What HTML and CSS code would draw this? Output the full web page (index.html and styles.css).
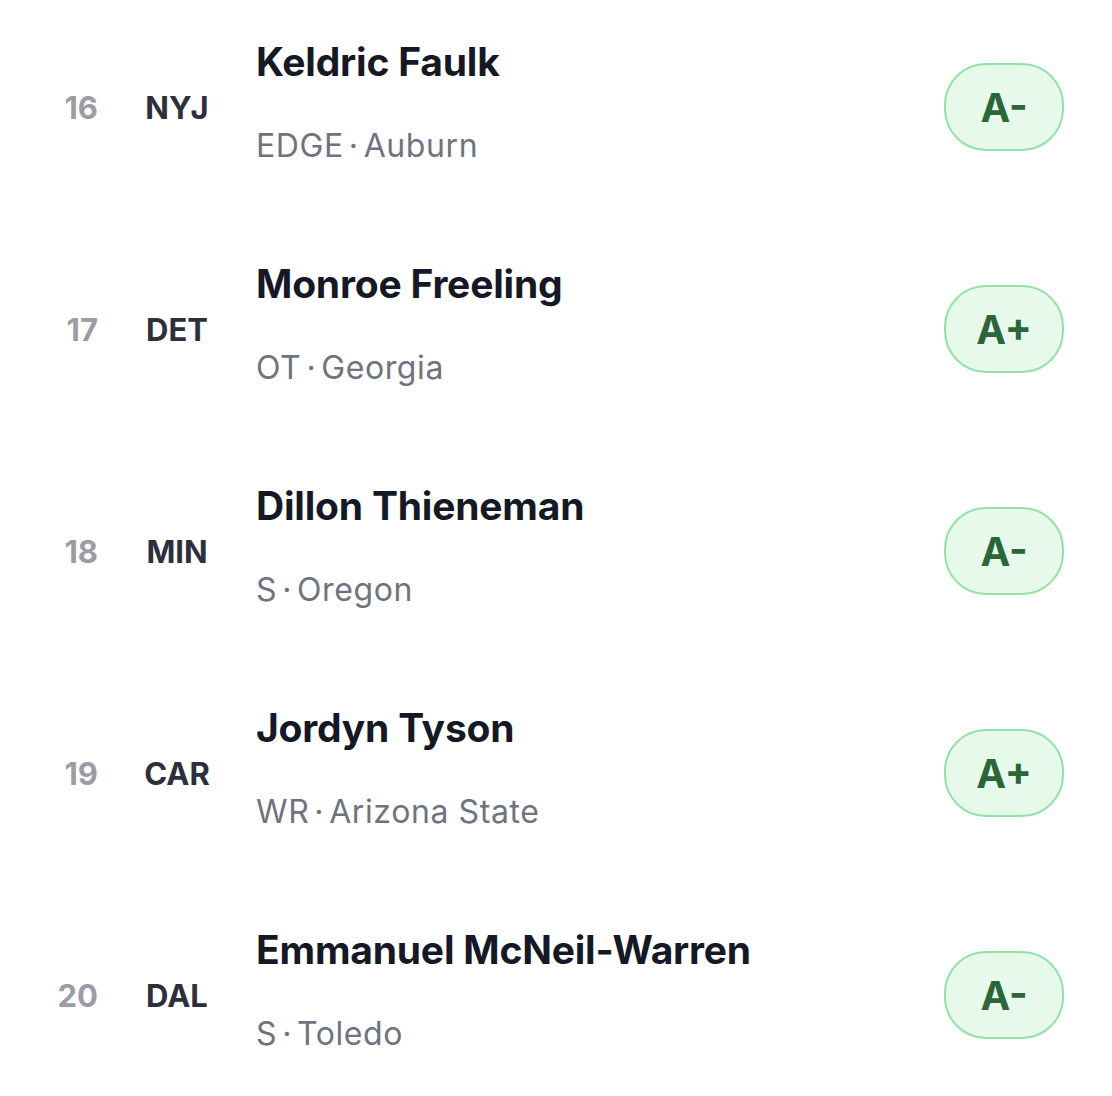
FILE: index.html
```html
<!DOCTYPE html>
<html>
<head>
<meta charset="utf-8">
<link rel="stylesheet" href="styles.css">
</head>
<body>
<ul class="picks">
  <li class="pick">
    <span class="num">16</span>
    <span class="team">NYJ</span>
    <div class="info">
      <div class="name">Keldric Faulk</div>
      <div class="meta">EDGE<span class="dot">·</span>Auburn</div>
    </div>
    <span class="grade">A-</span>
  </li>
  <li class="pick">
    <span class="num">17</span>
    <span class="team">DET</span>
    <div class="info">
      <div class="name">Monroe Freeling</div>
      <div class="meta">OT<span class="dot">·</span>Georgia</div>
    </div>
    <span class="grade">A+</span>
  </li>
  <li class="pick">
    <span class="num">18</span>
    <span class="team">MIN</span>
    <div class="info">
      <div class="name">Dillon Thieneman</div>
      <div class="meta">S<span class="dot">·</span>Oregon</div>
    </div>
    <span class="grade">A-</span>
  </li>
  <li class="pick">
    <span class="num">19</span>
    <span class="team">CAR</span>
    <div class="info">
      <div class="name">Jordyn Tyson</div>
      <div class="meta">WR<span class="dot">·</span>Arizona State</div>
    </div>
    <span class="grade">A+</span>
  </li>
  <li class="pick">
    <span class="num">20</span>
    <span class="team">DAL</span>
    <div class="info">
      <div class="name">Emmanuel McNeil-Warren</div>
      <div class="meta">S<span class="dot">·</span>Toledo</div>
    </div>
    <span class="grade">A-</span>
  </li>
</ul>
</body>
</html>
```
FILE: styles.css
```css
html, body {
  margin: 0;
  padding: 0;
  background: #ffffff;
}
body {
  font-family: "Inter", "Noto Sans", sans-serif;
}
.picks {
  list-style: none;
  margin: -4px 0 0 0;
  padding: 0;
}
.pick {
  height: 222px;
  display: flex;
  align-items: center;
}
.num {
  width: 98px;
  text-align: right;
  font-size: 31px;
  font-weight: 700;
  color: #9b9da6;
}
.team {
  width: 158px;
  text-align: center;
  font-size: 31px;
  font-weight: 700;
  color: #2b303c;
}
.info {
  flex: 1;
  display: flex;
  flex-direction: column;
  gap: 40px;
  padding-bottom: 10px;
}
.name {
  font-size: 39px;
  font-weight: 700;
  color: #141925;
  line-height: 48px;
  letter-spacing: -0.2px;
}
.meta {
  font-size: 32px;
  font-weight: 400;
  color: #6f737f;
  line-height: 40px;
  letter-spacing: 0.6px;
}
.dot {
  margin: 0 5px;
}
.grade {
  width: 116px;
  height: 84px;
  margin-right: 48px;
  border: 2px solid #92e2a6;
  border-radius: 42px;
  background: #e6f9ea;
  color: #2a6638;
  font-size: 40px;
  font-weight: 700;
  display: flex;
  align-items: center;
  justify-content: center;
}
```
